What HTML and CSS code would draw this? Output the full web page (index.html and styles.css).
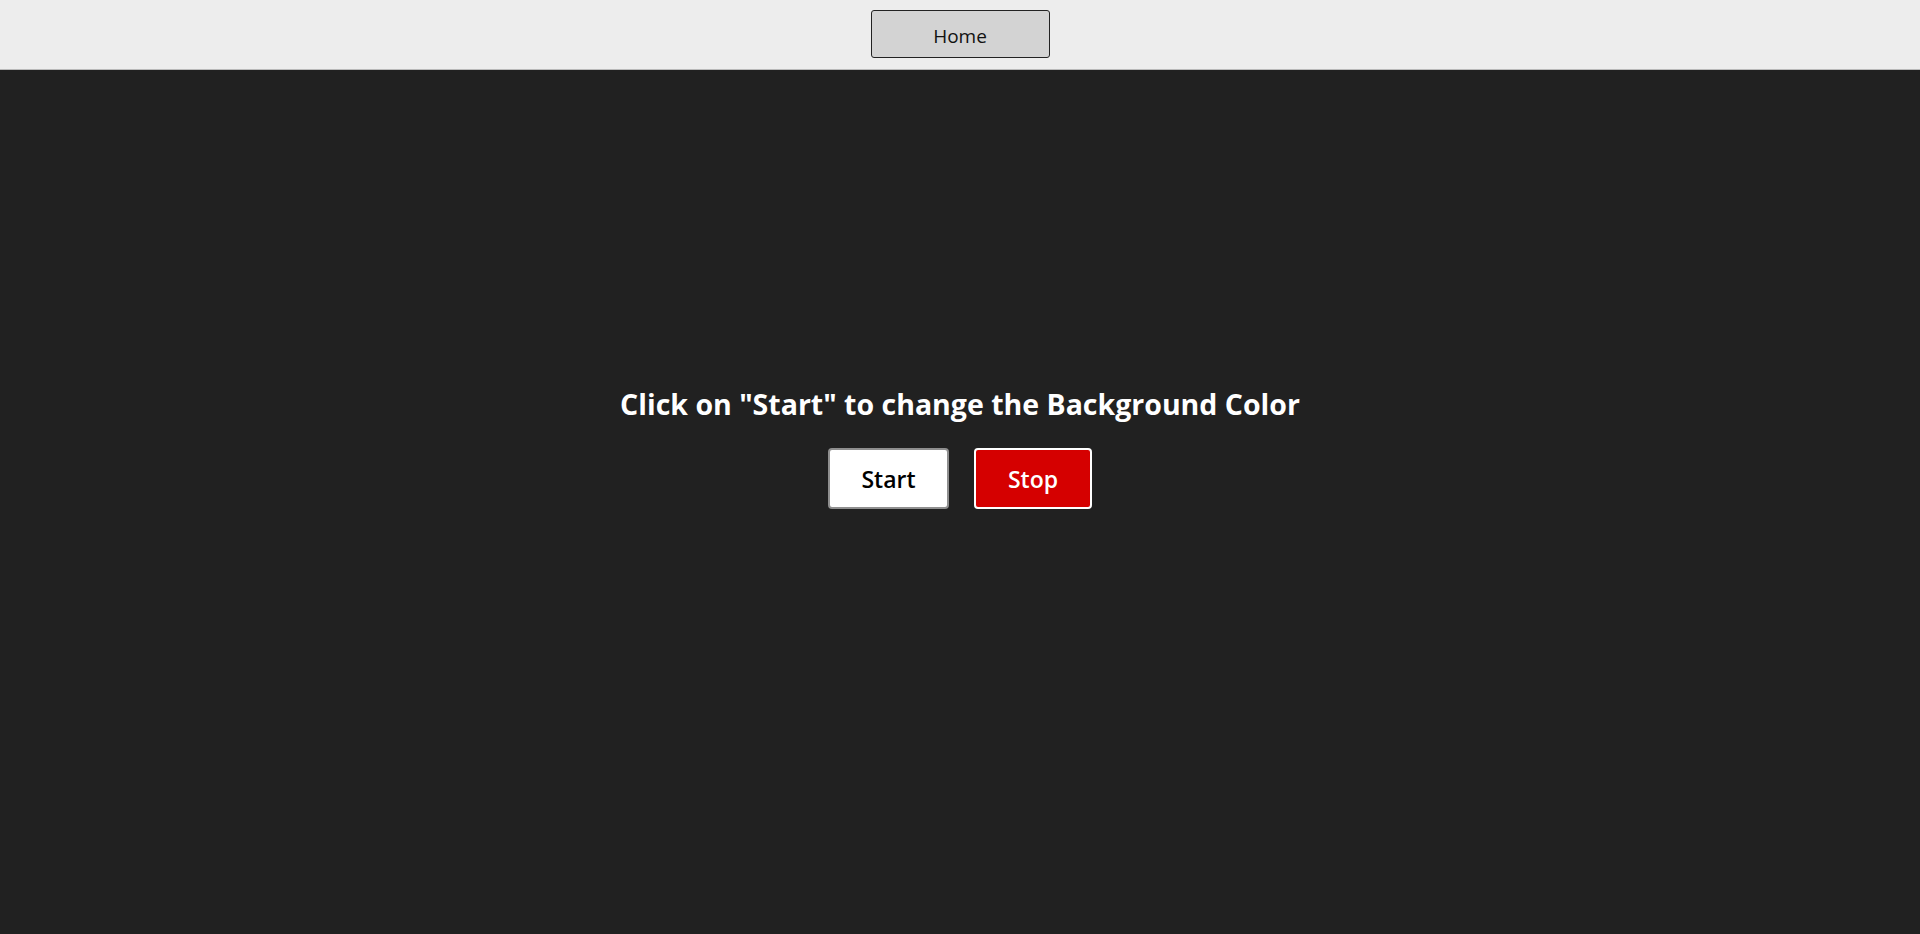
FILE: index.html
```html
<!DOCTYPE html>
<html lang="en">
<head>
<meta charset="utf-8">
<title>Background Color</title>
<link rel="stylesheet" href="styles.css">
</head>
<body>
<header class="topbar">
  <button class="home-btn" type="button">Home</button>
</header>
<main class="stage">
  <h1 class="title">Click on "Start" to change the Background Color</h1>
  <div class="actions">
    <button class="btn btn-start" type="button">Start</button>
    <button class="btn btn-stop" type="button">Stop</button>
  </div>
</main>
</body>
</html>
```
FILE: styles.css
```css
* { box-sizing: border-box; }
html, body {
  margin: 0;
  padding: 0;
  height: 100%;
}
body {
  font-family: "Open Sans", "Noto Sans", "Liberation Sans", sans-serif;
  background: #212121;
  display: flex;
  flex-direction: column;
}
.topbar {
  height: 70px;
  background: #ededed;
  border-bottom: 1px solid #b9b9b9;
  display: flex;
  justify-content: center;
  align-items: flex-start;
  padding-top: 10px;
  flex-shrink: 0;
}
.home-btn {
  width: 179px;
  height: 48px;
  background: #d3d3d3;
  border: 1px solid #222;
  border-radius: 3px;
  font-family: inherit;
  font-size: 19px;
  color: #111;
  padding: 3px 0 0;
}
.stage {
  flex: 1;
  display: flex;
  flex-direction: column;
  align-items: center;
  padding-top: 316px;
}
.title {
  margin: 0;
  color: #fff;
  font-size: 28.5px;
  font-weight: 700;
  line-height: 36px;
}
.actions {
  display: flex;
  gap: 25px;
  margin-top: 26px;
}
.btn {
  height: 61px;
  border-radius: 4px;
  font-family: inherit;
  font-size: 23px;
  font-weight: 600;
  padding: 0;
}
.btn-start {
  width: 121px;
  background: #fff;
  color: #000;
  border: 2px solid #8f8f8f;
}
.btn-stop {
  width: 118px;
  background: #d50000;
  color: #fff;
  border: 2px solid #fff;
}
```
